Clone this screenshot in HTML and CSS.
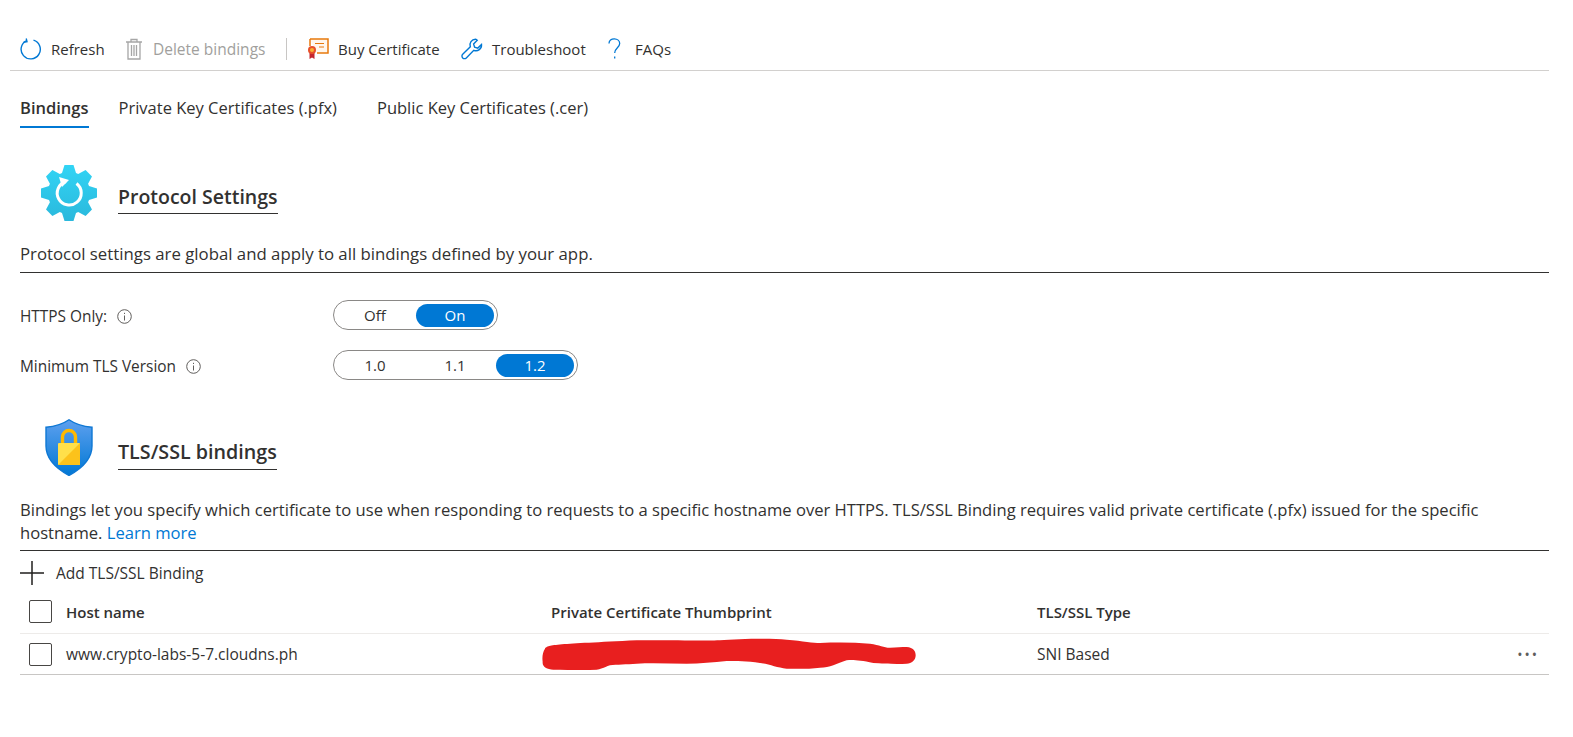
FILE: index.html
```html
<!DOCTYPE html>
<html lang="en">
<head>
    <meta charset="UTF-8">
    <title>TLS/SSL settings</title>
    <link rel="stylesheet" href="styles.css">
</head>
<body>
    <div class="toolbar">
        <button class="tool tool-refresh" type="button">
            <svg class="tool-icon" width="22" height="22" viewBox="0 0 22 22" fill="none" stroke="#0078d4" stroke-width="1.4"><path d="M13.5 2.1A9.6 9.6 0 1 1 6.6 2.6"/><path d="M6.2 0.5 7 3.6 3.4 4.4"/></svg>
            Refresh
        </button>
        <button class="tool tool-delete" type="button">
            <svg class="tool-icon" width="18" height="22" viewBox="0 0 18 22" fill="none" stroke="#a6a6a6" stroke-width="1.3"><path d="M1 4h16M6 4V1.5h6V4M3 4v17h12V4M6.5 7v11M9 7v11M11.5 7v11"/></svg>
            Delete bindings
        </button>
        <span class="tool-sep"></span>
        <button class="tool tool-buy" type="button">
            <svg class="tool-icon" width="22" height="22" viewBox="0 0 22 22" fill="none"><path d="M3 1h18v14H10" stroke="#e8790c" stroke-width="1.5" fill="#fff6ec"/><path d="M3 1v7" stroke="#e8790c" stroke-width="1.5"/><path d="M8 5.5h9M12 9h5" stroke="#e8790c" stroke-width="1.2"/><path d="M2.5 14v7l2.5-1.5L7.5 21v-7z" fill="#c4262e"/><circle cx="5" cy="12" r="4" fill="#e8502a"/><circle cx="5" cy="12" r="2" fill="#f8b133"/></svg>
            Buy Certificate
        </button>
        <button class="tool tool-fix" type="button">
            <svg class="tool-icon" width="22" height="22" viewBox="0 0 22 22" fill="none" stroke="#0078d4" stroke-width="1.4"><path d="M14.5 1.2a5.6 5.6 0 0 0-5.2 7.5L1.7 16.3a2.5 2.5 0 0 0 3.6 3.6l7.5-7.6A5.6 5.6 0 0 0 20.5 6.5l-3.7 3.6-3.2-1-1-3.2 3.6-3.7a5.6 5.6 0 0 0-1.7-1z"/></svg>
            Troubleshoot
        </button>
        <button class="tool tool-faq" type="button">
            <svg class="tool-icon" width="13" height="22" viewBox="0 0 13 22" fill="none" stroke="#0078d4" stroke-width="1.3"><path d="M1 5.5C1 2.5 3.3.8 6.3.8c3 0 5.4 2 5.4 4.8 0 4-5 4.5-5 9.4M6.7 18.5v2"/></svg>
            FAQs
        </button>
    </div>

    <div class="page">
        <div class="tabs">
            <a class="tab tab-active">Bindings</a>
            <a class="tab">Private Key Certificates (.pfx)</a>
            <a class="tab">Public Key Certificates (.cer)</a>
        </div>

        <div class="section-head head-protocol">
            <svg class="gear" width="56" height="56" viewBox="-28 -28 56 56">
                <defs><linearGradient id="gearFill" x1="0" y1="0" x2="0" y2="1"><stop offset="0" stop-color="#32d4f5"/><stop offset="1" stop-color="#2ab8dc"/></linearGradient></defs>
                <polygon fill="url(#gearFill)" points="-7,-20 -4.5,-28 4.5,-28 7,-20 9.19,-19.09 16.6,-22.98 22.98,-16.6 19.09,-9.19 20,-7 28,-4.5 28,4.5 20,7 19.09,9.19 22.98,16.6 16.6,22.98 9.19,19.09 7,20 4.5,28 -4.5,28 -7,20 -9.19,19.09 -16.6,22.98 -22.98,16.6 -19.09,9.19 -20,7 -28,4.5 -28,-4.5 -20,-7 -19.09,-9.19 -22.98,-16.6 -16.6,-22.98 -9.19,-19.09"/>
                <path d="M-3 -11.5A12 12 0 1 0 7.5 -9.5" fill="none" stroke="#fff" stroke-width="3"/>
                <path d="M-10 -16 0 -13 -7 -6z" fill="#fff"/>
            </svg>
            <h2 class="section-title">Protocol Settings</h2>
        </div>
        <p class="section-text text-protocol">Protocol settings are global and apply to all bindings defined by your app.</p>

        <div class="setting setting-https">
            <span class="setting-label">HTTPS Only:
                <svg class="info" width="15" height="15" viewBox="0 0 15 15" fill="none" stroke="#605e5c"><circle cx="7.5" cy="7.5" r="6.8"/><path d="M7.5 6.5v5M7.5 3.8V5"/></svg>
            </span>
            <div class="toggle">
                <span class="toggle-opt">Off</span>
                <span class="toggle-opt toggle-on">On</span>
            </div>
        </div>
        <div class="setting">
            <span class="setting-label">Minimum TLS Version
                <svg class="info" width="15" height="15" viewBox="0 0 15 15" fill="none" stroke="#605e5c"><circle cx="7.5" cy="7.5" r="6.8"/><path d="M7.5 6.5v5M7.5 3.8V5"/></svg>
            </span>
            <div class="toggle">
                <span class="toggle-opt">1.0</span>
                <span class="toggle-opt">1.1</span>
                <span class="toggle-opt toggle-on">1.2</span>
            </div>
        </div>

        <div class="section-head head-tls">
            <svg class="shield" width="48" height="57" viewBox="0 0 48 57">
                <defs><linearGradient id="shieldFill" x1="0" y1="0" x2="0" y2="1"><stop offset="0" stop-color="#5ea0ef"/><stop offset="1" stop-color="#0078d4"/></linearGradient></defs>
                <path d="M24 .8C18 5 10 7.5 1 8.2V27C1 42 14 51 24 56.5 34 51 47 42 47 27V8.2C38 7.5 30 5 24 .8z" fill="url(#shieldFill)" stroke="#0f78d4" stroke-width="1.4"/>
                <path d="M17.5 25v-7a6.5 6.5 0 0 1 13 0v7" fill="none" stroke="#ffb900" stroke-width="3.4"/>
                <rect x="13" y="24" width="22" height="22" rx="1" fill="#ffe04a"/>
                <path d="M35 24v22H13z" fill="#fcc21b"/>
            </svg>
            <h2 class="section-title">TLS/SSL bindings</h2>
        </div>
        <p class="section-text text-tls">Bindings let you specify which certificate to use when responding to requests to a specific hostname over HTTPS. TLS/SSL Binding requires valid private certificate (.pfx) issued for the specific hostname. <a class="link">Learn more</a></p>

        <div class="add-row">
            <svg width="24" height="24" viewBox="0 0 24 24" stroke="#201f1e" stroke-width="1.5"><path d="M12 0v24M0 12h24"/></svg>
            <span>Add TLS/SSL Binding</span>
        </div>

        <div class="grid-row grid-head">
            <span class="check"></span>
            <span>Host name</span>
            <span>Private Certificate Thumbprint</span>
            <span>TLS/SSL Type</span>
            <span></span>
        </div>
        <div class="grid-row grid-body">
            <span class="check"></span>
            <span>www.crypto-labs-5-7.cloudns.ph</span>
            <span><svg class="scribble" width="378" height="34" viewBox="60 140 1134 102"><path fill="#e81f1f" d="M75 175C85 162 110 162 350 150C450 148 550 152 600 150C650 146 750 143 800 148C850 152 880 158 900 158C950 156 1000 156 1050 160C1080 164 1090 172 1110 172C1130 172 1145 170 1160 170C1180 172 1187 182 1187 195C1187 210 1175 220 1160 220C1130 222 1090 220 1060 218C1020 210 1000 208 980 210C950 220 930 232 900 232C870 236 830 236 800 235C770 232 750 222 720 218C680 212 650 212 620 212C580 216 540 220 500 220C450 220 400 218 350 220C320 222 290 222 270 225C250 232 240 238 230 238C190 240 140 238 100 238C80 238 66 228 68 215C66 200 68 185 75 175z"/></svg></span>
            <span>SNI Based</span>
            <span class="more">•••</span>
        </div>
    </div>
</body>
</html>
```

FILE: styles.css
```css
* {
    box-sizing: border-box;
}

body {
    margin: 0;
    font-family: "Open Sans", "Noto Sans", sans-serif;
    color: #323130;
    background-color: #fff;
}

.toolbar {
    display: flex;
    align-items: center;
    height: 71px;
    margin: 0 24px 0 10px;
    padding: 28px 0 0 10px;
    border-bottom: 1px solid #d2d0ce;
}

.tool {
    display: flex;
    align-items: center;
    padding: 0;
    border: none;
    background: none;
    color: #323130;
    font-family: inherit;
    font-size: 15px;
    white-space: nowrap;
}

.tool-icon {
    margin-right: 9px;
}

.tool-refresh {
    width: 105px;
}

.tool-delete {
    width: 161px;
    color: #a19f9d;
    font-size: 15.5px;
}

.tool-delete .tool-icon {
    margin-right: 10px;
}

.tool-sep {
    width: 1px;
    height: 22px;
    margin-right: 20px;
    background-color: #c8c6c4;
}

.tool-buy {
    width: 154px;
}

.tool-fix {
    width: 147px;
}

.tool-faq .tool-icon {
    margin-right: 14px;
}

.page {
    padding: 0 24px 0 20px;
}

.tabs {
    display: flex;
    height: 57px;
    padding-top: 25px;
    font-size: 16.5px;
}

.tab {
    height: 32px;
    margin-right: 30px;
}

.tab + .tab + .tab {
    margin-left: 10px;
}

.tab-active {
    font-weight: 600;
    border-bottom: 2px solid #0078d4;
}

.section-head {
    display: flex;
    align-items: flex-end;
}

.head-protocol {
    margin-top: 37px;
    padding-left: 21px;
}

.head-tls {
    margin-top: 39px;
    padding-left: 25px;
}

.gear {
    margin-right: 21px;
}

.shield {
    margin-right: 25px;
}

.section-title {
    margin: 0 0 7px;
    padding-bottom: 3px;
    font-size: 19.5px;
    font-weight: 600;
    line-height: 26px;
    border-bottom: 1px solid #323130;
}

.head-tls .section-title {
    margin-bottom: 6px;
    padding-bottom: 4px;
    font-size: 19.7px;
}

.section-text {
    margin: 0;
    line-height: 23px;
    border-bottom: 1px solid #323130;
}

.text-protocol {
    margin-top: 21px;
    padding-bottom: 7px;
    font-size: 16.8px;
}

.text-tls {
    margin-top: 22px;
    padding-bottom: 6px;
    font-size: 16.6px;
}

.link {
    color: #0078d4;
}

.setting {
    display: flex;
    align-items: center;
    margin-top: 20px;
    font-size: 15.4px;
}

.setting-https {
    margin-top: 27px;
}

.setting-label {
    display: flex;
    align-items: center;
    gap: 10px;
    width: 313px;
    padding-top: 3px;
}

.toggle {
    display: flex;
    gap: 2px;
    height: 30px;
    padding: 3px 3px 3px 2px;
    border: 1px solid #8a8886;
    border-radius: 15px;
    font-size: 15px;
}

.toggle-opt {
    width: 78px;
    height: 23px;
    border-radius: 12px;
    text-align: center;
    line-height: 22px;
}

.toggle-on {
    background-color: #0078d4;
    color: #fff;
}

.add-row {
    display: flex;
    align-items: center;
    gap: 12px;
    height: 44px;
    font-size: 15.5px;
}

.grid-row {
    display: grid;
    grid-template-columns: 46px 485px 486px 1fr 40px;
    align-items: center;
    font-size: 15.5px;
}

.grid-head {
    height: 39px;
    padding-bottom: 5px;
    font-size: 15px;
    font-weight: 600;
    border-bottom: 1px solid #edebe9;
}

.grid-body {
    height: 41px;
    border-bottom: 1px solid #c8c6c4;
}

.check {
    width: 23px;
    height: 23px;
    margin-left: 9px;
    border: 1px solid #484644;
    border-radius: 2px;
}

.scribble {
    display: block;
    margin-left: -11px;
}

.more {
    justify-self: end;
    margin-right: 10px;
    color: #605e5c;
    font-size: 14px;
    letter-spacing: 2px;
}
```
